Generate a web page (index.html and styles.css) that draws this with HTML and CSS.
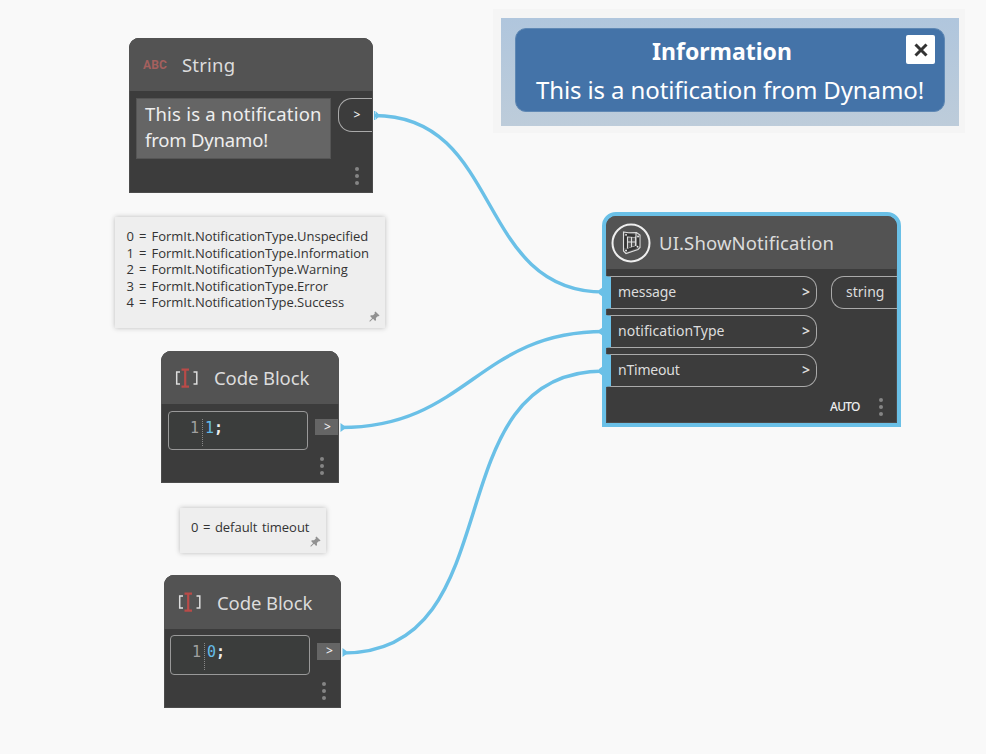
FILE: index.html
```html
<!DOCTYPE html>
<html lang="en">
<head>
<meta charset="utf-8">
<title>Dynamo graph</title>
<link rel="stylesheet" href="styles.css">
</head>
<body>
<main class="canvas">
  <svg class="wires" width="986" height="754" viewBox="0 0 986 754">
    <path d="M374 115.500C504 115.500 474 292 604 292"/>
    <path d="M341 427.500C467 427.500 478 331.500 604 331.500"/>
    <path d="M343 653C516 653 431 371 604 371"/>
    <g class="wire-ends">
      <path d="M374 111h1v9h-1zM375.500 111l3 3v3l-3 3zM340.500 423l4 3v3l-4 3zM342.500 648l4 3v3l-4 3z"/>
      <path d="M603 287l-4 3v4l4 3zM603 327l-4 3v3l4 3zM603 366l-4 3v4l4 3z"/>
    </g>
  </svg>

  <section class="node string-node">
    <header class="node-head"><span class="abc">ABC</span><h2 class="t-string">String</h2></header>
    <div class="node-body">
      <div class="string-value"><span class="sv1">This is a notification</span><br><span class="sv2">from Dynamo!</span></div>
      <div class="out-port round">&gt;</div>
    </div>
    <div class="dots"><i></i><i></i><i></i></div>
  </section>

  <aside class="note note-types">
    <p>0 = FormIt.NotificationType.Unspecified</p>
    <p>1 = FormIt.NotificationType.Information</p>
    <p>2 = FormIt.NotificationType.Warning</p>
    <p>3 = FormIt.NotificationType.Error</p>
    <p>4 = FormIt.NotificationType.Success</p>
    <svg class="pin" viewBox="0 0 12 12"><path d="M7 .5l4.500 4.300-1 1-1-.2-2 2 .2 2.200-1 1-2.300-2.300L1 11.700.4 11l3-3.100L1.200 5.500l1-1 2.200.2 2-2L6 1.500z"/></svg>
  </aside>

  <section class="node code-node first">
    <header class="node-head">
      <svg class="code-icon" viewBox="0 0 24 20"><path class="br" d="M5 4H1.700v12H5M18.500 4h3.300v12h-3.300"/><path class="cur" d="M6.500 1.700h7.500M6.500 18.600h7.500M10.200 1.500v17"/></svg>
      <h2>Code Block</h2>
    </header>
    <div class="node-body">
      <div class="editor"><span class="line">1</span><span class="num">1</span><span class="semi">;</span></div>
      <div class="out-port flat">&gt;</div>
    </div>
    <div class="dots"><i></i><i></i><i></i></div>
  </section>

  <aside class="note note-timeout">
    <p>0 = default timeout</p>
    <svg class="pin" viewBox="0 0 12 12"><path d="M7 .5l4.500 4.300-1 1-1-.2-2 2 .2 2.200-1 1-2.300-2.300L1 11.700.4 11l3-3.100L1.200 5.500l1-1 2.200.2 2-2L6 1.500z"/></svg>
  </aside>

  <section class="node code-node second">
    <header class="node-head">
      <svg class="code-icon" viewBox="0 0 24 20"><path class="br" d="M5 4H1.700v12H5M18.500 4h3.300v12h-3.300"/><path class="cur" d="M6.500 1.700h7.500M6.500 18.600h7.500M10.200 1.500v17"/></svg>
      <h2>Code Block</h2>
    </header>
    <div class="node-body">
      <div class="editor"><span class="line">1</span><span class="num">0</span><span class="semi">;</span></div>
      <div class="out-port flat">&gt;</div>
    </div>
    <div class="dots"><i></i><i></i><i></i></div>
  </section>

  <section class="node ui-node">
    <header class="node-head">
      <svg class="ui-icon" viewBox="0 0 40 40">
        <circle cx="20" cy="20" r="18.500"/>
        <path class="frame" d="M12.500 9l5 .8 8-.3 3.500 2.500v12.500l-2 2-12 4-2.500-2.500zM16.500 14h8v9l-8 3zM20.500 14v10M16.500 19h8M25 10v14"/>
        <path class="bolts" d="M15 11.800l8 1M27 14v9M15 27.500l10-3.300M14.500 14v10"/>
        <path class="holes" d="M15 11.800h.1M27 13.500h.1M26.500 23.700h.1M15 27.500h.1"/>
      </svg>
      <h2 class="t-ui">UI.ShowNotification</h2>
    </header>
    <div class="ports">
      <div class="inputs">
        <div class="in-port"><span class="p1">message</span><b>&gt;</b></div>
        <div class="in-port"><span class="p2">notificationType</span><b>&gt;</b></div>
        <div class="in-port"><span class="p3">nTimeout</span><b>&gt;</b></div>
      </div>
      <div class="result"><span>string</span></div>
    </div>
    <footer class="ui-foot"><span class="auto">AUTO</span></footer>
    <div class="dots"><i></i><i></i><i></i></div>
  </section>

  <section class="preview">
    <div class="backdrop">
      <div class="toast">
        <strong>Information</strong>
        <p>This is a notification from Dynamo!</p>
        <button class="close" aria-label="Close"><svg viewBox="0 0 14 14"><path d="M1.500 1.500l11 11M12.500 1.500l-11 11"/></svg></button>
      </div>
    </div>
  </section>
</main>
</body>
</html>
```

FILE: styles.css
```css
* { box-sizing: border-box; }
body { margin: 0; background: #f9f9f9; }
h2, p { margin: 0; font-weight: 400; }
.canvas { position: relative; width: 986px; height: 754px; overflow: hidden; font-family: "Noto Sans", sans-serif; }
.wires { position: absolute; left: 0; top: 0; fill: none; stroke: #6ac0e7; stroke-width: 3.5; }
.wire-ends { fill: #6ac0e7; stroke: none; }

.node { position: absolute; background: #3c3c3c; border-radius: 10px 10px 0 0; color: #dcdcdc; box-shadow: inset 0 0 0 1px #4c4c4c; }
.node-head { display: flex; align-items: center; height: 53px; background: #535353; border-radius: 10px 10px 0 0; }
.node-head h2 { font-size: 18.5px; line-height: 24px; letter-spacing: -0.1px; white-space: nowrap; }
.node-head .t-string { letter-spacing: 0.2px; }
.node-head .t-ui { letter-spacing: 0.12px; }
.node-body { display: flex; justify-content: space-between; }

.string-node { left: 129px; top: 38px; width: 244px; height: 155px; }
.string-node .node-head { padding-left: 14px; gap: 14px; }
.abc { width: 25px; font: bold 12px/14px "Roboto", sans-serif; letter-spacing: 0.1px; color: #a4605e; }
.string-node .node-body { padding: 7px 1px 0 7px; }
.string-value { width: 195px; height: 61px; padding: 2px 0 0 8px; background: #656565; border: 1px solid #555; color: #eee; font-size: 18.5px; line-height: 26px; letter-spacing: 0.2px; white-space: nowrap; }
.sv2 { letter-spacing: -0.18px; }
.out-port { color: #eee; text-align: center; font-weight: 500; }
.round { width: 34px; height: 34px; padding-left: 3px; border: 1px solid #aaa; border-right: 0; border-radius: 14px 0 0 14px; font-size: 12px; line-height: 32px; }
.dots { position: absolute; right: 14px; bottom: 8px; display: grid; gap: 3px; }
.dots i { width: 4px; height: 4px; border-radius: 2px; background: #858585; }
.code-node .dots { right: 15px; }

.code-node { width: 178px; height: 132px; }
.first { left: 161px; top: 351px; }
.second { left: 164px; top: 575px; width: 177px; height: 133px; }
.code-node .node-head { padding-left: 14px; gap: 15px; }
.second .node-head { height: 54px; }
.second h2 { margin-top: 2px; }
.code-icon { width: 24px; height: 20px; fill: none; stroke-width: 1.5; }
.br { stroke: #ddd; }
.cur { stroke: #b94b48; stroke-width: 2.2; }
.code-node .node-body { padding: 7px 1px 0 7px; }
.second .node-body { padding: 6px 1px 0 6px; }
.editor { display: flex; width: 140px; height: 39px; padding: 7px 0 0 21px; border: 1px solid #999; border-radius: 4px; background: #3b3d3c; color: #eee; font: 15px/19px "DejaVu Sans Mono", monospace; }
.second .editor { height: 40px; }
.line { width: 13px; height: 27px; margin-right: 2px; border-right: 1px dotted #888; color: #a0a0a0; }
.num { color: #65bce8; }
.semi { font-weight: 700; }
.flat { width: 23px; height: 16px; margin-top: 8px; padding-left: 2px; background: #656565; font-size: 12px; line-height: 15px; }
.second .flat { height: 17px; }

.note { position: absolute; background: #eee; color: #333; font: 13px/16.5px "Open Sans", sans-serif; letter-spacing: -0.03px; word-spacing: 1.8px; white-space: nowrap; box-shadow: 0 0 5px #bbb; }
.note-types { left: 115px; top: 217px; width: 270px; height: 111px; padding: 11px 0 0 11.5px; }
.note-timeout { left: 180px; top: 508px; width: 146px; height: 45px; padding: 11px 0 0 11px; word-spacing: 1.2px; }
.pin { position: absolute; right: 5px; bottom: 6px; width: 11px; height: 11px; fill: #919191; }

.ui-node { left: 602px; top: 212px; width: 299px; height: 215px; border: 4px solid #6ac0e7; border-radius: 14px 14px 0 0; }
.ui-node .node-head { padding-left: 5px; gap: 8px; }
.ui-icon { width: 40px; height: 40px; fill: none; stroke: #eee; stroke-width: 1.2; }
.ui-icon circle { stroke-width: 2; }
.ui-icon .frame { stroke: #ddd; stroke-width: 1.1; }
.bolts { stroke: #333; stroke-width: 2.4; stroke-linecap: round; }
.holes { stroke: #eee; stroke-width: 1.8; stroke-linecap: round; }
.ports { display: flex; justify-content: space-between; padding-top: 7px; }
.inputs { display: grid; gap: 6px; width: 211px; }
.in-port { display: flex; justify-content: space-between; align-items: center; height: 33px; padding: 0 6px 2px 7px; border: 1px solid #aaa; border-left: 5px solid #6ac0e7; border-radius: 0 13px 13px 0; font-size: 14px; letter-spacing: -0.1px; }
.in-port .p2 { letter-spacing: 0.05px; }
.in-port .p3 { letter-spacing: -0.2px; }
.in-port b { font-size: 14px; font-weight: 600; }
.result { width: 66px; height: 33px; padding-left: 14px; border: 1px solid #aaa; border-right: 0; border-radius: 13px 0 0 13px; font-size: 14px; line-height: 30px; }
.ui-foot { padding: 12px 0 0 224px; color: #eee; font-size: 12px; font-weight: 500; letter-spacing: -0.7px; line-height: 16px; }

.ui-node .dots { right: 14px; bottom: 7px; }

.preview { position: absolute; left: 493px; top: 9px; width: 472px; height: 124px; padding: 9px 8px; background: #f5f5f5; }
.backdrop { width: 458px; height: 108px; padding: 10px 14px; background: linear-gradient(#b0c6dd, #bdccda); }
.toast { position: relative; width: 430px; height: 84px; border-radius: 11px; background: #4473a8; border: 1px solid #5f88b4; color: #fff; text-align: center; padding: 9px 0 0; }
.toast strong { display: block; margin-left: -16px; font: bold 23px/27px "Noto Sans", sans-serif; }
.toast p { margin-top: 10px; font-size: 24px; line-height: 30px; letter-spacing: -0.12px; white-space: nowrap; }
.close { position: absolute; right: 9px; top: 6px; width: 29px; height: 29px; padding: 0; border: 0; border-radius: 2px; background: #fff; display: grid; place-items: center; }
.close svg { width: 14px; height: 14px; stroke: #333; stroke-width: 3; }
```
